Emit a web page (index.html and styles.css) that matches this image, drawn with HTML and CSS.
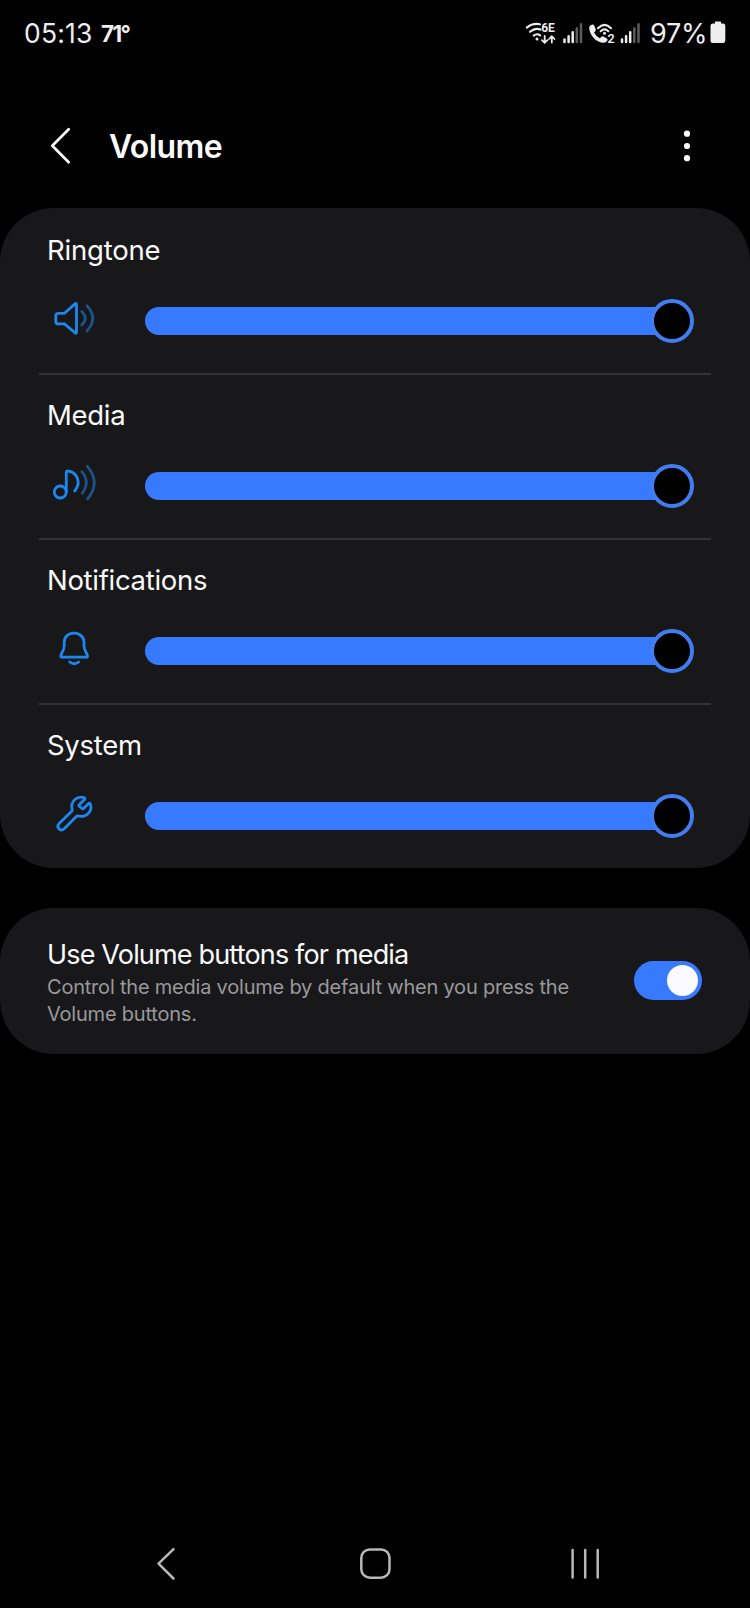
FILE: index.html
```html
<!DOCTYPE html>
<html lang="en">
<head>
<meta charset="utf-8">
<title>Volume</title>
<link rel="stylesheet" href="styles.css">
</head>
<body>
<div class="screen">
  <div class="status">
    <span class="clock">05:13</span>
    <span class="temp">71°</span>
    <svg class="indicators" viewBox="520 14 125 38" width="125" height="38">
      <g fill="none" stroke="#eee" stroke-width="2.1" stroke-linecap="round">
        <path d="M526.800 27.600Q532.500 22.800 540 24.200M530 31.800Q535 27.500 540.500 29.600M533.700 35.600Q537 33 540.200 35.400"/>
        <path d="M544.700 36V42.500M542 40.200L544.700 42.800L547.400 40.200M551.800 42.500V36.500M549.100 39L551.800 36.200L554.500 39" stroke-width="1.800"/>
        <path d="M598 28.200Q604.500 21.500 611 28.200M600.700 31.200Q604.500 27.600 608.300 31.200"/>
      </g>
      <g fill="#eee">
        <circle cx="537" cy="39" r="1.500"/>
        <circle cx="604.500" cy="33.300" r="1.500"/>
        <path d="M589.200 28.500C588.800 26.300 590.800 24.800 592.500 24.600Q593.800 24.500 594.300 25.800L595.800 29.600Q596.200 30.800 594.800 31.700L594 32.400Q596 36.200 599.800 38.200L601.400 36.700Q602.300 35.900 603.400 36.500L606.900 38.500Q608 39.200 607.400 40.500Q606 43.200 602.800 42.800C595.500 41.700 590 35.500 589.200 28.500Z"/>
      </g>
      <text class="tag" x="541.200" y="32">6E</text>
      <text class="tag digit" x="607.500" y="43.200">2</text>
      <g stroke-width="2.500" stroke-linecap="round" stroke="#eee">
        <path d="M564.500 39.500V42M568.600 36.300V42M572.700 32.300V42M622 39.500V42M626.100 36.300V42M630.200 32.300V42"/>
        <path stroke="#5c5c5c" d="M576.800 28.200V42M581 24.200V42M634.300 28.200V42M638.500 24.200V42"/>
      </g>
    </svg>
    <span class="percent">97%</span>
    <svg class="battery" viewBox="0 0 16 23" width="16" height="23"><path fill="#eee" d="M5 0.500H11V2.600H13Q15.300 2.600 15.300 5V19.500Q15.300 22 13 22H3Q.5 22 .5 19.500V5Q.5 2.600 3 2.600H5Z"/></svg>
  </div>

  <header class="header">
    <svg class="back" viewBox="45 120 30 52" width="30" height="52"><path d="M68.700 129.300L52.300 145.700L68.700 162.200"/></svg>
    <h1 class="title">Volume</h1>
    <svg class="more" viewBox="0 0 12 40" width="12" height="40" fill="#fafafa"><circle cx="6" cy="7.700" r="3.100"/><circle cx="6" cy="20" r="3.100"/><circle cx="6" cy="32.200" r="3.100"/></svg>
  </header>

  <section class="card">
    <div class="row">
      <div class="label ringtone">Ringtone</div>
      <div class="control">
        <svg class="icon" viewBox="45 290 60 60" width="60" height="60">
          <path d="M58.300 313.300H64.500L75 303.900Q76.500 302.700 76.500 304.500V332Q76.500 334 75 332.800L64.500 323.900H58.300Q55.800 323.900 55.800 321.400V315.800Q55.800 313.300 58.300 313.300Z"/>
          <path class="dim" d="M81.800 311.500Q88.800 318.200 81.800 325M87 305.800Q98.500 318.300 87 331"/>
        </svg>
        <div class="track"><span class="knob"></span></div>
      </div>
    </div>
    <div class="row">
      <div class="label media">Media</div>
      <div class="control">
        <svg class="icon" viewBox="45 455 60 60" width="60" height="60">
          <circle cx="60.300" cy="492" r="6"/>
          <path d="M66.300 492V472.500Q66.300 471 67.800 471C76 471.500 82.300 482 74.700 491"/>
          <path class="dim" d="M81.800 471.800Q90.500 481.500 82.300 493.200M87.300 466.300Q101 482.500 87.500 499"/>
        </svg>
        <div class="track"><span class="knob"></span></div>
      </div>
    </div>
    <div class="row">
      <div class="label notifications">Notifications</div>
      <div class="control">
        <svg class="icon" viewBox="45 620 60 60" width="60" height="60">
          <path d="M74 633.200C68 633.200 64.200 637.200 64.200 642.500V646C64.200 651 60.800 653.200 60.800 656Q60.800 657.200 62 657.200H86.300Q87.500 657.200 87.500 656C87.500 653.200 84 651 84 646V642.500C84 637.200 80 633.200 74 633.200Z"/>
          <path d="M69.700 662Q74.200 665.400 78.700 662"/>
        </svg>
        <div class="track"><span class="knob"></span></div>
      </div>
    </div>
    <div class="row">
      <div class="label system">System</div>
      <div class="control">
        <svg class="icon" viewBox="45 785 60 60" width="60" height="60">
          <path d="M84.500 799.500Q85.500 798.300 84 797.600C77 795.500 70 801.500 72.200 809.600Q72.300 810.800 71.500 811.600L58.900 823.800C55.800 827.500 60.500 832 64.200 828.800L76.300 816.600Q77 815.900 78.300 816C86 818 93 811 90.400 804.200Q89.800 802.400 88.600 803.600L83.800 808.300Q83 809.200 82 808.500L79.200 806.200Q78.400 805.500 79.200 804.700Z"/>
        </svg>
        <div class="track"><span class="knob"></span></div>
      </div>
    </div>
  </section>

  <section class="card option">
    <div class="copy">
      <div class="label use">Use Volume buttons for media</div>
      <p class="desc">Control the media volume by default when you press the<br>Volume buttons.</p>
    </div>
    <span class="toggle"><span class="thumb"></span></span>
  </section>

  <nav class="nav">
    <svg viewBox="150 1540 460 48" width="460" height="48">
      <path d="M173.500 1549.200L158.500 1563.700L173.500 1578.500"/>
      <rect x="361.300" y="1549.400" width="28.200" height="28.300" rx="8.500"/>
      <path d="M572.600 1550V1577.500M585.200 1550V1577.500M597.700 1550V1577.500"/>
    </svg>
  </nav>
</div>
</body>
</html>
```

FILE: styles.css
```css
* { box-sizing: border-box; }
body { margin: 0; background: #000; }
.screen {
  width: 750px;
  height: 1608px;
  display: flex;
  flex-direction: column;
  background: #000;
  color: #fafafa;
  font-family: Inter, Roboto, sans-serif;
  white-space: nowrap;
}
.status { height: 68px; padding: 0 0 2px 24px; display: flex; align-items: center; color: #eee; }
.clock { width: 77px; font-size: 26.5px; letter-spacing: 0.2px; }
.temp { width: 419px; font-size: 22.5px; font-weight: 700; letter-spacing: -1.7px; padding-top: 1px; }
.indicators { flex: none; }
.tag { font-family: Roboto, sans-serif; font-size: 12px; font-weight: 700; fill: #eee; }
.digit { font-size: 12.5px; font-weight: 600; }
.percent { width: 65px; padding-left: 5px; font-size: 27px; letter-spacing: -0.2px; }
.battery { margin-bottom: 1px; }

.header { height: 140px; padding: 16px 57px 0 45px; display: flex; align-items: center; }
.back { fill: none; stroke: #fafafa; stroke-width: 2.7; stroke-linecap: round; stroke-linejoin: round; }
.title { flex: 1; margin: 2px 0 0 34px; font-size: 32px; font-weight: 600; line-height: 40px; letter-spacing: -0.6px; }

.card { background: #18181a; border-radius: 54px; }
.row { height: 165px; padding: 24px 39px 0 45px; position: relative; }
.row:not(:last-child)::after {
  content: "";
  position: absolute;
  left: 39px;
  right: 39px;
  bottom: -2px;
  height: 2px;
  background: #333335;
}
.label { font-size: 27.5px; line-height: 36px; padding-left: 2px; letter-spacing: -0.3px; }
.ringtone { letter-spacing: -0.2px; }
.use { padding-top: 1px; font-size: 27px; letter-spacing: -0.83px; }
.control { display: flex; align-items: center; margin-top: 22px; height: 60px; }
.icon { flex: none; fill: none; stroke: #1b87ef; stroke-width: 2.8; stroke-linecap: round; stroke-linejoin: round; }
.dim { stroke: #1b5288; }
.track {
  position: relative;
  width: 540px;
  height: 28px;
  margin: 1px 0 0 40px;
  border-radius: 14px;
  background: #387aff;
}
.knob {
  position: absolute;
  right: -9px;
  top: -8px;
  width: 44px;
  height: 44px;
  border: 4px solid #417df0;
  border-radius: 50%;
  background: #000;
}

.option { height: 146px; margin-top: 40px; padding: 28px 48px 0 45px; display: flex; justify-content: space-between; }
.desc { margin: 1px 0 0 2px; font-size: 20px; line-height: 27px; letter-spacing: -0.21px; color: #99999b; }
.toggle { width: 68px; height: 39px; margin-top: 25px; padding: 4px; display: flex; justify-content: flex-end; border-radius: 20px; background: #387aff; }
.thumb { width: 31px; height: 31px; border-radius: 50%; background: #fafaff; }

.nav { margin: auto 0 20px 150px; height: 48px; }
.nav svg { display: block; fill: none; stroke: #b8b8b8; stroke-width: 2.5; stroke-linecap: round; stroke-linejoin: round; }
```
